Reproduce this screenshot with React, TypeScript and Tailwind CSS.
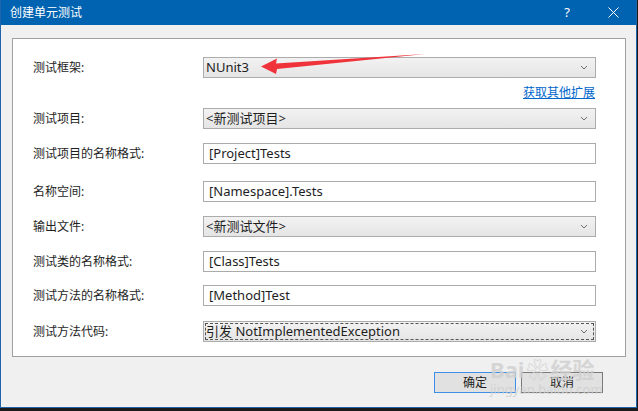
import React from 'react';

const FONT = { fontFamily: '"Noto Sans", "Noto Sans CJK SC", sans-serif' };

function Chevron() {
  return (
    <svg width="8" height="5" viewBox="0 0 8 5" className="shrink-0">
      <path d="M1 1 L4 4 L7 1" fill="none" stroke="#6d6d6d" strokeWidth="1" />
    </svg>
  );
}

function Combo({ value, focused = false }: { value: string; focused?: boolean }) {
  return (
    <div className="relative flex h-[21px] w-[393px] items-center border border-[#acacac] bg-gradient-to-b from-[#f2f2f2] to-[#e5e5e5] pl-[2px] pr-[7px]">
      {focused && (
        <div className="pointer-events-none absolute inset-[1px] border border-dashed border-[#555]" />
      )}
      <span className="flex-1 text-[13px] leading-none text-[#1e1e1e]">{value}</span>
      <Chevron />
    </div>
  );
}

function TextBox({ value }: { value: string }) {
  return (
    <div className="flex h-[21px] w-[393px] items-center border border-[#ababab] bg-white pl-[5px]">
      <span className="text-[13px] leading-none text-[#1e1e1e]">{value}</span>
    </div>
  );
}

function Row({ label, children, className = '' }: { label: string; children: React.ReactNode; className?: string }) {
  return (
    <div className={`flex h-[21px] items-center ${className}`}>
      <span className="w-[170px] text-[12px] text-[#1e1e1e]">{label}</span>
      {children}
    </div>
  );
}

export default function App() {
  return (
    <div className="relative h-[411px] w-[638px] overflow-hidden bg-[#1b1b1b]" style={FONT}>
      <div className="flex h-[408px] w-[637px] flex-col border-x border-b border-[#1f64a8] bg-[#f0f0f0]">
        {/* title bar */}
        <div className="flex h-[25px] shrink-0 items-center bg-[#0063b1] pl-[9px] text-white">
          <span className="text-[12px]">创建单元测试</span>
          <div className="flex-1" />
          <span className="mr-[38px] text-[13px]">?</span>
          <svg width="11" height="11" viewBox="0 0 11 11" className="mr-[17px]">
            <path d="M0.5 0.5 L10.5 10.5 M10.5 0.5 L0.5 10.5" stroke="#fff" strokeWidth="1" />
          </svg>
        </div>

        {/* content panel */}
        <div className="ml-[11px] mt-[13px] h-[319px] w-[614px] border border-[#a0a0a0] bg-white pl-[20px] pt-[18px]">
          <Row label="测试框架:">
            <Combo value="NUnit3" />
          </Row>
          <div className="flex h-[30px] w-[562px] items-center justify-end">
            <span className="text-[12px] text-[#0066cc] underline">获取其他扩展</span>
          </div>
          <Row label="测试项目:">
            <Combo value="<新测试项目>" />
          </Row>
          <Row label="测试项目的名称格式:" className="mt-[14px]">
            <TextBox value="[Project]Tests" />
          </Row>
          <Row label="名称空间:" className="mt-[17px]">
            <TextBox value="[Namespace].Tests" />
          </Row>
          <Row label="输出文件:" className="mt-[14px]">
            <Combo value="<新测试文件>" />
          </Row>
          <Row label="测试类的名称格式:" className="mt-[14px]">
            <TextBox value="[Class]Tests" />
          </Row>
          <Row label="测试方法的名称格式:" className="mt-[13px]">
            <TextBox value="[Method]Test" />
          </Row>
          <Row label="测试方法代码:" className="mt-[15px]">
            <Combo value="引发 NotImplementedException" focused />
          </Row>
        </div>

        {/* buttons */}
        <div className="mt-[15px] flex justify-end gap-[5px] pr-[33px]">
          <button className="flex h-[21px] w-[82px] items-center justify-center border border-[#3c8fe6] bg-[#e1e1e1] text-[12px] text-[#1e1e1e]">
            确定
          </button>
          <button className="flex h-[21px] w-[82px] items-center justify-center border border-[#7a7a7a] bg-[#e1e1e1] text-[12px] text-[#1e1e1e]">
            取消
          </button>
        </div>
      </div>

      {/* red annotation arrow */}
      <svg className="pointer-events-none absolute left-0 top-0" width="638" height="411">
        <path d="M261 66.5 L277 58.5 L276 63.5 L425 54 L277 69 L276 74 Z" fill="#f0333a" />
      </svg>

      {/* watermark */}
      <div className="pointer-events-none absolute left-[490px] top-[358px] flex flex-col items-start text-[#cfcfcf] opacity-80">
        <span className="text-[22px] font-bold leading-none">Bai<span className="mx-[2px]">❀</span>经验</span>
        <span className="text-[13px] leading-none mt-[3px]">jingyan.baidu.com</span>
      </div>
    </div>
  );
}
